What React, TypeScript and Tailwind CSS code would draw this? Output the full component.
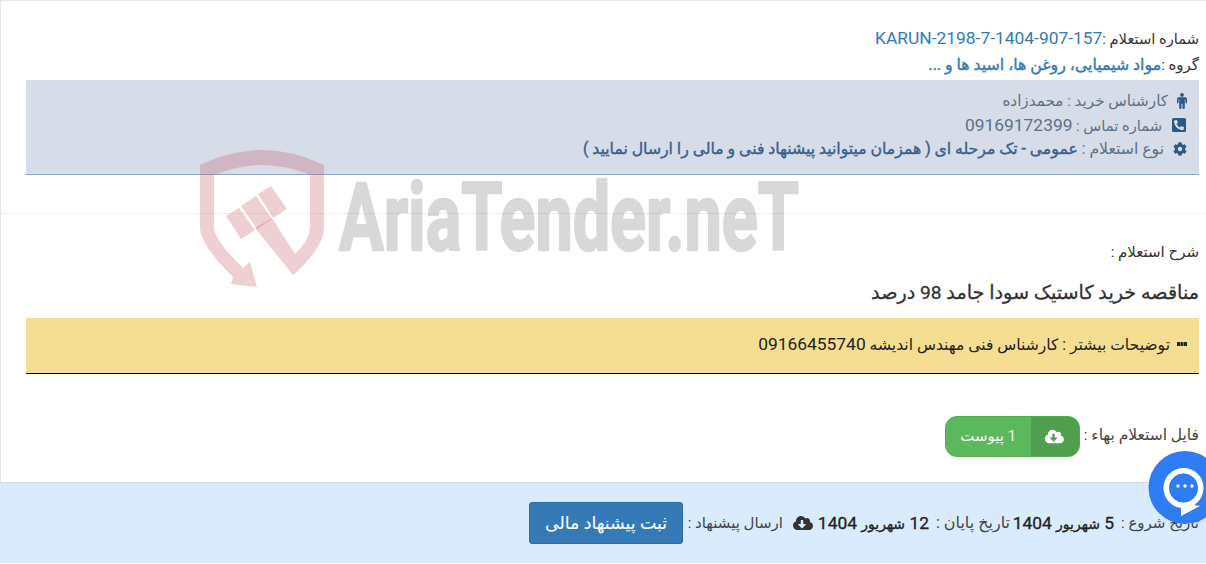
import { FaPhoneSquareAlt, FaCog, FaCloudDownloadAlt } from "react-icons/fa";

function Watermark() {
  return (
    <svg className="absolute left-0 top-0 pointer-events-none" width="1206" height="564" viewBox="0 0 1206 564">
      <g fill="#bb434b" fillOpacity="0.25">
        <path d="M200 165 Q262 135 324 165 L324 227 Q324 248 293 275 L255 228 L272 218 L295 254 Q310 240 310 227 L310 175 Q262 155 214 175 L214 227 Q214 240 243 268 L250 262 L257 287 L231 284 L233 277 Q200 245 200 227 Z" />
        <path d="M226 216 L239 208 L255 230 L241 239 Z" />
        <path d="M241 206 L256 196 L272 219 L257 229 Z" />
        <path d="M258 194 L271 186 L287 209 L273 218 Z" />
      </g>
      <text x="339" y="250" fontSize="94" fontWeight="700" fontFamily="Roboto, sans-serif" fill="#000" stroke="#000" strokeWidth="2.5" strokeLinejoin="round" opacity="0.15" textLength="460" lengthAdjust="spacingAndGlyphs" direction="ltr">AriaTender.neT</text>
    </svg>
  );
}

function ChatBubble() {
  return (
    <svg className="absolute left-[1148px] top-[451px]" width="58" height="73" viewBox="0 0 58 73">
      <circle cx="37" cy="36.5" r="36.5" fill="#2f7df6" />
      <circle cx="35.5" cy="37" r="17.25" fill="none" stroke="#fff" strokeWidth="5.5" />
      <path d="M33 52 L33 65 L52 55 Z" fill="#fff" />
      <circle cx="30" cy="35" r="1.7" fill="#fff" />
      <circle cx="37" cy="35" r="1.7" fill="#fff" />
      <circle cx="44" cy="35" r="1.7" fill="#fff" />
    </svg>
  );
}

function MaleIcon() {
  return (
    <svg width="10" height="16" viewBox="0 0 10 16" fill="#2c5a85">
      <circle cx="5" cy="1.9" r="1.9" />
      <path d="M1.6 4.2 H8.4 Q10 4.2 10 5.8 V9.6 Q10 10.4 9.2 10.4 Q8.4 10.4 8.4 9.6 V6.2 H7.8 V15 Q7.8 16 6.8 16 Q5.5 16 5.5 15 V10.8 H4.5 V15 Q4.5 16 3.2 16 Q2.2 16 2.2 15 V6.2 H1.6 V9.6 Q1.6 10.4 0.8 10.4 Q0 10.4 0 9.6 V5.8 Q0 4.2 1.6 4.2 Z" />
    </svg>
  );
}

function DotsIcon() {
  return (
    <svg width="10" height="4" viewBox="0 0 10 4" fill="#222">
      <rect x="0" y="0" width="3" height="4" rx="0.5" />
      <rect x="3.5" y="0" width="3" height="4" rx="0.5" />
      <rect x="7" y="0" width="3" height="4" rx="0.5" />
    </svg>
  );
}

export default function App() {
  return (
    <div dir="rtl" className="relative w-[1206px] h-[564px] overflow-hidden bg-white text-[15px] text-[#333] font-['Roboto','Noto_Sans','DejaVu_Sans',sans-serif]">
      <div className="h-[214px] border-t border-l border-b border-t-[#e3e7ee] border-l-[#e3e7ee] border-b-[#eeeeee] pr-[7px] pl-[25px] pt-[24px]">
        <div className="h-[26px] leading-[26px]">
          <span className="text-[14.7px]">شماره استعلام :</span><span className="text-[17.4px] text-[#337ab7]">KARUN-2198-7-1404-907-157</span>
        </div>
        <div className="h-[29px] leading-[28px]">
          گروه :<span className="text-[15.8px] text-[#337ab7] [-webkit-text-stroke:0.4px_#337ab7]">مواد شیمیایی، روغن ها، اسید ها و ...</span>
        </div>
        <div className="h-[95px] bg-[#d6dde8] border-b border-[#8fa9c9] pr-[12px] pt-[9px]">
          <div className="h-[24px] leading-[24px] flex items-center gap-[9px]">
            <MaleIcon />
            <span className="text-[#5f6f85] text-[15.2px]">کارشناس خرید : محمدزاده</span>
          </div>
          <div className="h-[24px] leading-[24px] flex items-center gap-[9px]">
            <FaPhoneSquareAlt className="text-[#2c5a85] text-[16px]" />
            <span className="text-[#5f6f85] text-[14.7px]">شماره تماس : <span className="text-[17.4px]">09169172399</span></span>
          </div>
          <div className="h-[24px] leading-[24px] flex items-center gap-[9px]">
            <FaCog className="text-[#2c5a85] text-[14px]" />
            <span className="text-[#5f6f85] text-[15.7px]">نوع استعلام : <span className="text-[#3a5f8e] [-webkit-text-stroke:0.4px_#3a5f8e]">عمومی - تک مرحله ای ( همزمان میتوانید پیشنهاد فنی و مالی را ارسال نمایید )</span></span>
          </div>
        </div>
      </div>

      <div className="pr-[7px] pl-[7px] border-l border-l-[#e3e7ee] h-[268px]">
        <div className="pt-[27px] h-[64px] leading-[22px]">شرح استعلام :</div>
        <div className="h-[40px] leading-[30px] text-[19.2px] text-[#333] [-webkit-text-stroke:0.3px_#333]">مناقصه خرید کاستیک سودا جامد 98 درصد</div>
        <div className="ml-[18px] h-[56px] bg-[#f5de92] border-b border-black pr-[12px] flex items-center gap-[7px] text-[#222] pb-[3px]">
          <DotsIcon />
          <span className="text-[15.6px]">توضیحات بیشتر : کارشناس فنی مهندس اندیشه <span className="text-[17.4px]">09166455740</span></span>
        </div>
        <div className="mt-[41px] flex items-center h-[42px] gap-[4px]">
          <span className="text-[#444] text-[15.5px]">فایل استعلام بهاء :</span>
          <div className="flex h-[41px] w-[135px] rounded-[12px] overflow-hidden border border-[#4cae4c] text-white bg-[#5cb85c]">
            <div className="w-[48px] bg-[#4f9f4f] flex items-center justify-center">
              <FaCloudDownloadAlt className="text-[19px]" />
            </div>
            <div className="flex-1 flex items-center justify-center text-[#f2f8f2]">1 پیوست</div>
          </div>
        </div>
      </div>

      <div className="h-[81px] bg-[#d9ebfd] border-t border-[#c9dcef] pr-[7px] flex items-center whitespace-nowrap">
        <span className="text-[#444] w-[80px] shrink-0">تاریخ شروع :</span>
        <span className="mr-[5px] w-[99px] shrink-0 text-[17.4px] text-[#222] [-webkit-text-stroke:0.3px_#222]">5 <span className="text-[14px]">شهریور</span> 1404</span>
        <span className="mr-[5px] w-[75px] shrink-0 text-[16px] text-[#444]">تاریخ پایان :</span>
        <span className="mr-[6px] w-[109px] shrink-0 text-[17.4px] text-[#222] [-webkit-text-stroke:0.3px_#222]">12 <span className="text-[14px]">شهریور</span> 1404</span>
        <FaCloudDownloadAlt className="text-[20px] text-[#333] mr-[7px] shrink-0" />
        <span className="text-[#444] mr-[10px] w-[95px] shrink-0">ارسال پیشنهاد :</span>
        <div className="h-[42px] w-[154px] mr-[5px] shrink-0 bg-[#337ab7] border border-[#2e6da4] rounded-[3px] text-white text-[17.4px] [-webkit-text-stroke:0.1px_#fff] flex items-center justify-center">ثبت پیشنهاد مالی</div>
      </div>

      <Watermark />
      <ChatBubble />
    </div>
  );
}
